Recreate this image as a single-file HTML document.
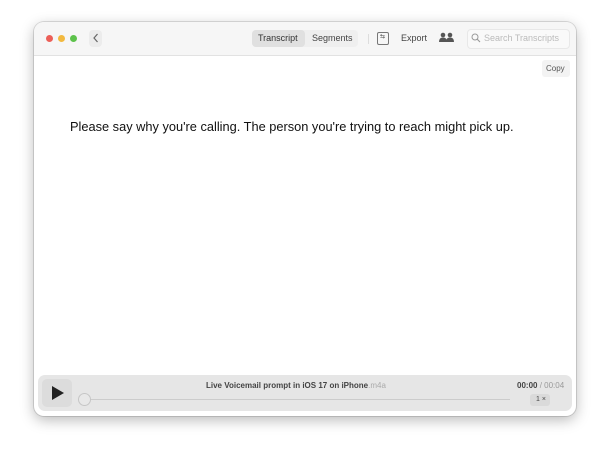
<!DOCTYPE html>
<html><head><style>
body{margin:0;width:610px;height:461px;background:#fff;position:relative;font-family:"Liberation Sans",sans-serif;overflow:hidden}
.win{position:absolute;left:34px;top:22px;width:542px;height:394px;border-radius:10px;background:#fff;box-shadow:0 4px 14px rgba(0,0,0,.28),0 0 0 1px rgba(0,0,0,.12);overflow:hidden}
.tb{position:absolute;left:0;top:0;width:542px;height:33px;background:#f6f6f6;border-bottom:1px solid #e2e2e2}
.dot{position:absolute;top:13px;width:7px;height:7px;border-radius:50%}
.t{position:absolute;font-size:9px;color:#444}
.bar{position:absolute;left:4px;top:353px;width:534px;height:36px;background:#e6e6e6;border-radius:7px}
</style></head><body>
<div class="win">
<div class="tb">
<div class="dot" style="left:12px;background:#ec5f58"></div>
<div class="dot" style="left:24px;background:#f2b93f"></div>
<div class="dot" style="left:36px;background:#5dc24b"></div>
<div style="position:absolute;left:55px;top:8px;width:13px;height:17px;border-radius:4px;background:#ececec"></div>
<svg style="position:absolute;left:57px;top:10px" width="10" height="12"><path d="M6.5 2 L3 6 L6.5 10" stroke="#666" stroke-width="1.2" fill="none"/></svg>
<div style="position:absolute;left:218px;top:8px;width:106px;height:17px;border-radius:4px;background:#efefef"></div>
<div style="position:absolute;left:218px;top:8px;width:53px;height:17px;border-radius:4px;background:#e0e0e0"></div>
<div class="t" style="left:224px;top:11px;color:#333">Transcript</div>
<div class="t" style="left:278px;top:11px">Segments</div>
<div style="position:absolute;left:334px;top:12px;width:1px;height:10px;background:#ddd"></div>
<div style="position:absolute;left:343px;top:10px;width:10px;height:11px;border:1px solid #777;border-radius:2px"></div>
<div class="t" style="left:346px;top:11px;font-size:6px">⇆</div>
<div class="t" style="left:367px;top:11px">Export</div>
<svg style="position:absolute;left:405px;top:10px" width="15" height="11"><circle cx="4" cy="3" r="2.3" fill="#555"/><circle cx="11" cy="3" r="2.3" fill="#555"/><path d="M0 10 Q0 5.5 4 5.5 Q8 5.5 8 10Z M7 10 Q7 5.5 11 5.5 Q15 5.5 15 10Z" fill="#555"/></svg>
<div style="position:absolute;left:433px;top:7px;width:101px;height:18px;border-radius:4px;background:#f9f9f9;border:1px solid #e8e8e8"></div>
<svg style="position:absolute;left:437px;top:11px" width="10" height="10"><circle cx="4" cy="4" r="3" stroke="#999" stroke-width="1" fill="none"/><path d="M6.2 6.2 L9 9" stroke="#999" stroke-width="1.1"/></svg>
<div class="t" style="left:450px;top:11px;color:#bbb">Search Transcripts</div>
</div>
<div style="position:absolute;left:508px;top:38px;width:28px;height:17px;border-radius:3px;background:#f3f3f3"></div>
<div class="t" style="left:512px;top:42px;font-size:8px;color:#555">Copy</div>
<div style="position:absolute;left:36px;top:97px;font-size:12.8px;color:#111;white-space:nowrap">Please say why you're calling. The person you're trying to reach might pick up.</div>
<div class="bar">
<div style="position:absolute;left:4px;top:4px;width:30px;height:28px;border-radius:5px;background:#dcdcdc"></div>
<svg style="position:absolute;left:13px;top:10px" width="14" height="16"><path d="M1 1 L13 8 L1 15Z" fill="#222"/></svg>
<div style="position:absolute;left:42px;top:24px;width:430px;height:1px;background:#ccc"></div>
<div style="position:absolute;left:40px;top:18px;width:11px;height:11px;border-radius:50%;background:#e8e8e8;border:1px solid #c6c6c6"></div>
<div class="t" style="left:168px;top:6px;font-size:8px;font-weight:bold;color:#444">Live Voicemail prompt in iOS 17 on iPhone<span style="font-weight:normal;color:#aaa">.m4a</span></div>
<div class="t" style="left:479px;top:6px;font-size:8px;font-weight:bold;color:#444">00:00<span style="font-weight:normal;color:#999"> / 00:04</span></div>
<div style="position:absolute;left:492px;top:19px;width:20px;height:12px;border-radius:3px;background:#dadada"></div>
<div class="t" style="left:498px;top:21px;font-size:7px;color:#444">1 ×</div>
</div>
</div>
</body></html>
